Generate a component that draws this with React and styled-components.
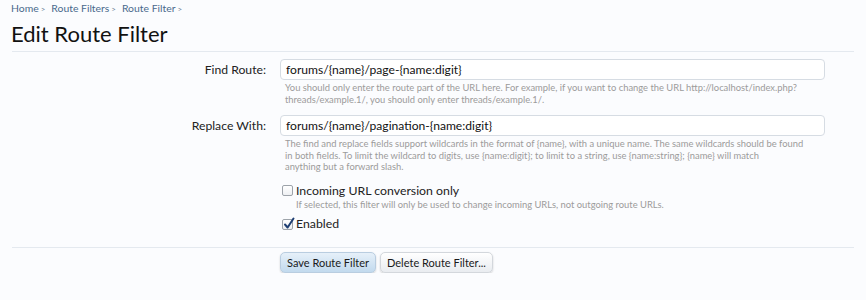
import React from "react";
import styled, { createGlobalStyle } from "styled-components";

const Global = createGlobalStyle`
  html, body { margin: 0; padding: 0; background: #fbfcfe; }
  body { font-family: Lato, "DejaVu Sans", sans-serif; color: #000; }
`;

const Page = styled.div`
  padding: 1px 12px 0 12px;
  width: 866px;
  box-sizing: border-box;
`;

const Crumbs = styled.nav`
  display: flex;
  font-family: Lato, "DejaVu Sans", sans-serif;
  font-size: 10.4px;
  line-height: 14px;
  margin-left: -1px;
`;

const Crumb = styled.a`
  color: #49698c;
  text-decoration: none;
  margin-right: 6px;
  &::after {
    content: ">";
    font-size: 8px;
    color: #6a7e94;
    margin-left: 2px;
  }
`;

const Title = styled.h1`
  margin: 5px 0 0 -1px;
  font-family: Lato, "DejaVu Sans", sans-serif;
  font-weight: 400;
  font-size: 22px;
  line-height: 26px;
  color: #111;
`;

const Rule = styled.hr`
  border: 0;
  height: 1px;
  background: #e4e9ef;
  margin: ${(p) => p.$m || "4px 0 0 0"};
`;

const Form = styled.div`
  display: grid;
  grid-template-columns: 254px 545px;
  column-gap: 14px;
  padding-top: ${(p) => p.$pt || "7px"};
`;

const Label = styled.label`
  text-align: right;
  font-family: Lato, "DejaVu Sans", sans-serif;
  font-size: 12.2px;
  color: #222;
  line-height: 21px;
`;

const Field = styled.div`
  display: flex;
  flex-direction: column;
  margin-bottom: ${(p) => p.$mb || "10px"};
`;

const Input = styled.div`
  height: 21px;
  box-sizing: border-box;
  border: 1px solid #d6dce3;
  border-radius: 4px;
  background: #fff;
  padding: 0 5px;
  font-family: Lato, "DejaVu Sans", sans-serif;
  font-size: 12.1px;
  line-height: 19px;
  color: #111;
  white-space: nowrap;
`;

const Help = styled.p`
  margin: 2px 0 0 5px;
  font-family: Lato, "DejaVu Sans", sans-serif;
  font-size: 9.4px;
  line-height: 11.5px;
  color: #9b9b9b;
  white-space: nowrap;
`;

const Check = styled.div`
  display: flex;
  align-items: center;
  gap: 3px;
  font-family: Lato, "DejaVu Sans", sans-serif;
  font-size: 12.3px;
  color: #222;
  line-height: 16px;
  margin-left: 2px;
`;

const Box = styled.span`
  position: relative;
  width: 11px;
  height: 11px;
  box-sizing: border-box;
  border: 1px solid #9da3aa;
  border-radius: 2px;
  background: linear-gradient(#ffffff, #eef0f3);
  display: inline-block;
  flex: none;
`;

const Tick = styled.svg`
  position: absolute;
  left: 0px;
  top: -3px;
`;

const CheckHelp = styled(Help)`
  margin: 0 0 0 16px;
`;

const Buttons = styled.div`
  display: flex;
  gap: 4px;
`;

const Button = styled.button`
  height: 21px;
  padding: 0 6px;
  border: 1px solid ${(p) => (p.$primary ? "#b9cde0" : "#d3d7dc")};
  border-radius: 5px;
  background: ${(p) =>
    p.$primary
      ? "linear-gradient(#e6f0f9, #c2daee)"
      : "linear-gradient(#ffffff, #e9ecf0)"};
  box-shadow: 0 1px 2px rgba(0, 0, 0, 0.18);
  font-family: Lato, "DejaVu Sans", sans-serif;
  font-size: 11px;
  color: #1a1a1a;
  cursor: pointer;
  white-space: nowrap;
`;

export default function App() {
  return (
    <>
      <Global />
      <Page>
        <Crumbs>
          <Crumb href="#">Home</Crumb>
          <Crumb href="#">Route Filters</Crumb>
          <Crumb href="#">Route Filter</Crumb>
        </Crumbs>
        <Title>Edit Route Filter</Title>
        <Rule />
        <Form>
          <Label>Find Route:</Label>
          <Field>
            <Input>{"forums/{name}/page-{name:digit}"}</Input>
            <Help>
              You should only enter the route part of the URL here. For example, if you want to change the URL http://localhost/index.php?
              <br />
              threads/example.1/, you should only enter threads/example.1/.
            </Help>
          </Field>

          <Label>Replace With:</Label>
          <Field>
            <Input>{"forums/{name}/pagination-{name:digit}"}</Input>
            <Help>
              {"The find and replace fields support wildcards in the format of {name}, with a unique name. The same wildcards should be found"}
              <br />
              {"in both fields. To limit the wildcard to digits, use {name:digit}; to limit to a string, use {name:string}; {name} will match"}
              <br />
              anything but a forward slash.
            </Help>
          </Field>

          <div />
          <Field $mb="6px">
            <Check>
              <Box />
              Incoming URL conversion only
            </Check>
            <CheckHelp>
              If selected, this filter will only be used to change incoming URLs, not outgoing route URLs.
            </CheckHelp>
          </Field>

          <div />
          <Field $mb="15px">
            <Check>
              <Box>
                <Tick width="12" height="13" viewBox="0 0 12 13">
                  <path d="M2 7.5 L4.6 10.5 L10.5 1.5" fill="none" stroke="#1f3f73" strokeWidth="2" strokeLinecap="round" strokeLinejoin="round" />
                </Tick>
              </Box>
              Enabled
            </Check>
          </Field>
        </Form>
        <Rule $m="0" />
        <Form $pt="4px">
          <div />
          <Buttons>
            <Button $primary>Save Route Filter</Button>
            <Button>Delete Route Filter...</Button>
          </Buttons>
        </Form>
      </Page>
    </>
  );
}
